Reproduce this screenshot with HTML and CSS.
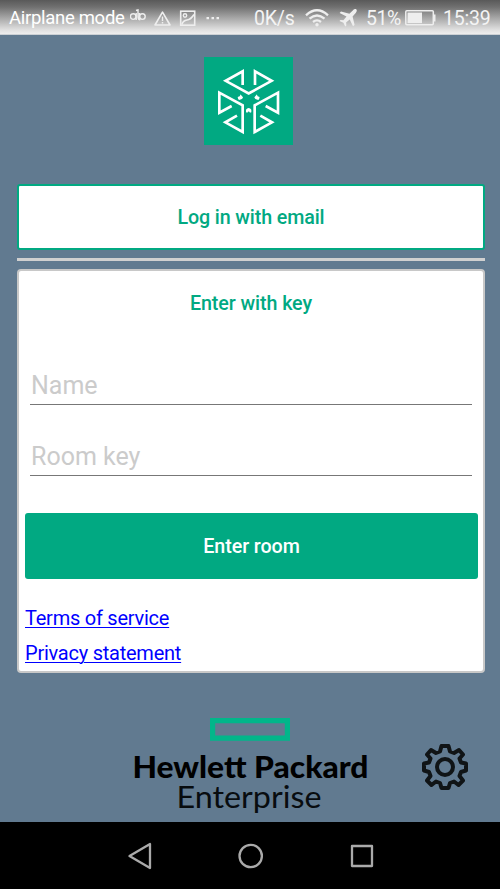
FILE: index.html
```html
<!DOCTYPE html>
<html lang="en">
<head>
<meta charset="utf-8">
<meta name="viewport" content="width=device-width">
<title>Enter room</title>
<link rel="stylesheet" href="styles.css">
</head>
<body>
<div class="screen">
  <header class="status">
    <span class="carrier">Airplane mode</span>
    <svg class="notices" width="92" height="34" viewBox="0 0 92 34" fill="none" stroke="#eee" stroke-width="1.4">
      <circle cx="3.2" cy="15.600" r="2.800"/><circle cx="12.400" cy="15.600" r="2.800"/><path d="M6.200 12v7M6 9.500l2-.6v6.300q0 3 1.500 3.500V12"/>
      <path d="M32.500 11.200L40 24H25z" stroke-width="1.600" stroke-linejoin="round"/><path d="M32.500 15.500v4.500M32.500 21v1.500"/>
      <rect x="50.700" y="10.200" width="14" height="14" stroke-width="1.600"/><circle cx="55" cy="14.500" r="1.700"/><path d="M52 23.500q1-4 5-4.500t7-5.500" stroke-width="1.600"/>
      <path d="M76.500 17.200h2.500M81.500 17.200h2.500M86.500 17.200h2.500" stroke-width="2.200"/>
    </svg>
    <span class="speed">0K/s</span>
    <svg class="wifi" width="24" height="18" viewBox="0 0 24 18" fill="none" stroke="#eee" stroke-width="2.300">
      <path d="M1 6.300q11-10 22 0M4.500 9.700q7.500-6.500 15 0M8 13q4-3.300 8 0"/><circle cx="12" cy="15.800" r="1.700" fill="#eee" stroke="none"/>
    </svg>
    <svg class="plane" width="18" height="18" viewBox="0 0 18 18" fill="#eee">
      <path d="M17.400.6c-1-1-2.400-.3-3.600.8l-3.400 3.400L2 2.500.600 4l6.900 3.600-3.100 3.700-2.900-.4L.4 12l4 1.800L6.200 17.600l1.200-1-.3-3 3.600-3.200L14 17.300l1.600-1.400-2-8.500 3.100-3.400c1-1.200 1.500-2.600.7-3.400z"/>
    </svg>
    <span class="charge">51%</span>
    <svg class="battery" width="31" height="16" viewBox="0 0 31 16">
      <rect x=".8" y=".8" width="27.500" height="14" rx="1" fill="none" stroke="#eee" stroke-width="1.500"/><rect x="2.500" y="2.500" width="14.500" height="10.600" fill="#eee"/><path d="M29 4.500h1.500v7H29z" fill="#eee"/>
    </svg>
    <span class="clock">15:39</span>
  </header>

  <main class="content">
    <svg class="logo" width="89" height="88" viewBox="15 21 267 264" fill="none" stroke="#fff" stroke-width="8">
      <path d="M15 21h267v264H15z" fill="#01a982" stroke="none"/>
      <path d="M131 105V64L80 92.500l69 38 69-38L168 64v41"/>
      <path d="M98 168l-37 20v-60l70 38v80l-52-29 35-20"/>
      <path d="M200 168l37 20v-60l-70 38v80l52-29-35-20"/>
      <g fill="#fff" stroke="none"><path d="M124 133q1 7-8 8q1 7 4 9 11-2 12-8zM174 133q-1 7 8 8-1 7-4 9-11-2-12-8zM141 187v-8q3-5 8-5t8 5v8l-4 1q-4-7-8 0z"/></g>
    </svg>
    <button class="email-login"><span>Log in with email</span></button>
    <div class="divider"></div>
    <section class="card">
      <h1><span>Enter with key</span></h1>
      <div class="field name">Name</div>
      <div class="field key">Room key</div>
      <button class="enter"><span>Enter room</span></button>
      <div class="links">
        <a class="terms" href="#">Terms of service</a>
        <a class="privacy" href="#">Privacy statement</a>
      </div>
    </section>
    <footer class="brand">
      <svg class="wordmark" width="240" height="104" viewBox="0 0 240 104">
        <path d="M82.600 3.600h74.800v17.600H82.600z" fill="none" stroke="#01b68a" stroke-width="5.200"/>
        <text class="company" x="2.500" y="60.700" textLength="236" lengthAdjust="spacingAndGlyphs">Hewlett Packard</text>
        <text class="division" x="46.500" y="90.700" textLength="145" lengthAdjust="spacingAndGlyphs">Enterprise</text>
      </svg>
      <svg class="gear" width="48" height="48" viewBox="-24 -24 48 48" fill="none" stroke="#101416" stroke-width="4" stroke-linejoin="round">
        <circle r="8"/>
        <path d="M-3.500-21H3.500L5-15.500 9-14 14-17 18-12.500 14.500-8.500 16-4.500 21-3.500V3.500L16 5 14.500 9 18 13.500 13.500 18 9 14.500 5 16 3.500 21H-3.500L-5 16-9 14.500-13.500 18-18 13.500-14.500 9-16 5-21 3.500V-3.500L-16-4.500-14.500-8.500-18-12.500-14-17-9-14-5-15.500Z"/>
      </svg>
    </footer>
  </main>

  <nav class="navigation">
    <svg width="250" height="30" viewBox="0 0 250 30" fill="none" stroke="#aaa" stroke-width="2.300" stroke-linejoin="round">
      <path d="M25 3v24L4.500 15z"/><circle cx="125.700" cy="15" r="11.200"/><rect x="227" y="5" width="20" height="20"/>
    </svg>
  </nav>
</div>
</body>
</html>
```

FILE: styles.css
```css
* { box-sizing: border-box; }
body { margin: 0; font-family: Roboto, sans-serif; }
button { font: inherit; padding: 0; }
.screen { width: 500px; height: 889px; display: flex; flex-direction: column; background: #617a90; overflow: hidden; }

.status { height: 35px; padding-left: 9px; display: flex; align-items: center; flex: none; color: #f4f4f4; font-size: 19.500px; line-height: 35px; letter-spacing: -.2px; white-space: nowrap; background: linear-gradient(#595959 0, #707070 20%, #a8a8a8 52%, #dedede 84%, #eee 97%, #aeb6bd 100%); }
.status span, .status svg { flex: none; }
.speed, .charge, .clock { padding-top: 2px; }
.carrier { width: 121px; padding-top: 1px; font-size: 18.500px; letter-spacing: -.3px; color: #fff; }
.notices { width: 92px; margin-right: 32px; }
.speed { width: 51px; }
.wifi { width: 24px; margin-right: 10px; }
.plane { margin-right: 9px; }
.charge { width: 39px; letter-spacing: -.4px; }
.battery { margin-right: 7px; }

.content { height: 787px; padding: 22px 15px 0 17px; display: flex; flex-direction: column; flex: none; }
.logo { align-self: center; margin-right: 5px; }
.email-login { height: 66px; margin-top: 39px; border: 2px solid #01a982; border-radius: 3px; background: #fff; color: #01a982; font-size: 19.700px; letter-spacing: -.12px; font-weight: 500; flex: none; }
.divider { height: 3px; margin-top: 8px; background: #d0d0d0; flex: none; }
.card { height: 404px; margin-top: 8px; padding: 0 6px; border: 2px solid #c8c8c8; border-radius: 4px; background: #fff; flex: none; }
.card h1 { margin: 0; padding-top: 20px; font-size: 19.700px; line-height: 26px; letter-spacing: -.08px; font-weight: 500; text-align: center; color: #01a982; }
.field { height: 40px; margin: 0 5px; padding-left: 1px; border-bottom: 1.500px solid #777; color: #cbcbcb; font-size: 25px; line-height: 42px; }
.name { margin-top: 48px; }
.key { margin-top: 31px; }
.enter { display: block; width: 453px; height: 66px; margin-top: 37px; padding-top: 1px; border: 0; border-radius: 3px; background: #01a982; color: #fff; font-size: 19.700px; letter-spacing: -.08px; font-weight: 500; }
.links { padding-top: 22px; display: flex; flex-direction: column; align-items: flex-start; font-size: 20px; line-height: 35px; letter-spacing: -.24px; }
.links a { color: #00f; text-underline-offset: 2px; text-decoration-thickness: 1px; }

.brand { margin-top: 44px; display: flex; justify-content: flex-end; padding-right: 16px; flex: none; }
.wordmark { margin-right: 51px; }
.company { font: 900 30px Lato, sans-serif; }
.division { font: 400 30px Lato, sans-serif; fill: #080c0f; }
.gear { margin-top: 26px; }

.navigation { height: 67px; display: flex; align-items: center; justify-content: center; background: #000; flex: none; }
```
